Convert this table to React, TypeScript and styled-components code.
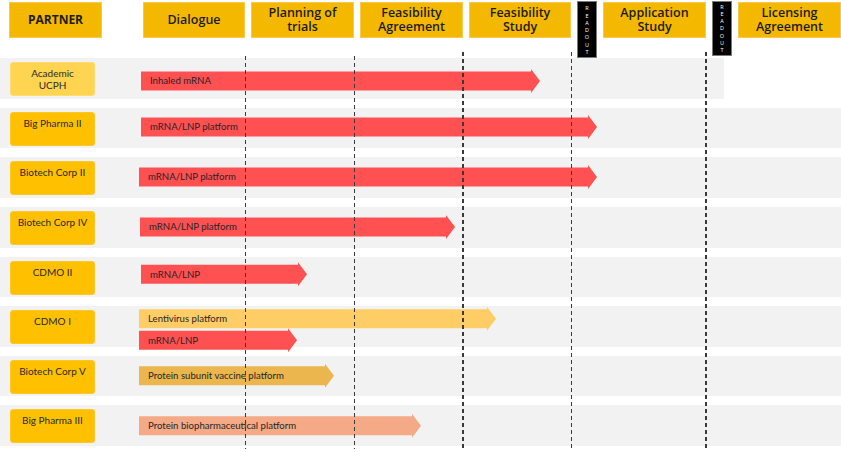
import React from "react";
import styled, { createGlobalStyle } from "styled-components";

const GlobalStyle = createGlobalStyle`
  html, body { margin: 0; padding: 0; background: #ffffff; }
  body { overflow: hidden; font-family: "Open Sans", "Liberation Sans", sans-serif; }
  * { box-sizing: border-box; }
`;

const Page = styled.div`
  position: relative;
  width: 841px;
  height: 452px;
  background: #ffffff;
  overflow: hidden;
`;

const HeaderRow = styled.div`
  display: flex;
  align-items: flex-start;
  gap: 6px;
  height: 58px;
  padding: 1px 0 0 9px;
`;

const HeaderBox = styled.div<{ $w: number; $after?: number; $caps?: boolean }>`
  width: ${(p) => p.$w}px;
  height: 36px;
  margin-top: 1px;
  margin-right: ${(p) => p.$after ?? 0}px;
  flex: none;
  display: flex;
  flex-direction: column;
  align-items: center;
  justify-content: center;
  text-align: center;
  background: #f5b800;
  border: 1px solid #f8c94c;
  font-family: "Open Sans", "Liberation Sans", sans-serif;
  font-weight: ${(p) => (p.$caps ? 700 : 600)};
  font-size: ${(p) => (p.$caps ? 12 : 12.5)}px;
  line-height: 14px;
  color: #1c1c1c;
`;

const HeaderLine = styled.span`
  display: block;
  height: 14px;
`;

const Readout = styled.div<{ $h: number; $pt: number }>`
  width: 20px;
  height: ${(p) => p.$h}px;
  flex: none;
  background: #000000;
  border: 1px solid #7a7a7a;
  display: flex;
  flex-direction: column;
  align-items: center;
  padding-top: ${(p) => p.$pt}px;
  font-family: "Open Sans", "Liberation Sans", sans-serif;
  font-size: 5.5px;
  line-height: 7.3px;
  color: #ffffff;
  -webkit-font-smoothing: antialiased;
`;

const Rows = styled.div`
  display: flex;
  flex-direction: column;
  gap: 9px;
  margin-top: 0.3px;
`;

const Band = styled.div<{ $w: number }>`
  width: ${(p) => p.$w}px;
  height: 40.6px;
  background: #f2f2f2;
  display: flex;
  align-items: flex-start;
`;

const PartnerBox = styled.div<{ $light?: boolean }>`
  width: 85px;
  height: 34px;
  margin: 4px 0 0 10px;
  flex: none;
  border-radius: 3px;
  background: ${(p) => (p.$light ? "#ffd451" : "#ffc000")};
  border: 1px solid ${(p) => (p.$light ? "#ffdc70" : "#ffc726")};
  text-align: center;
  padding-top: 5px;
  font-family: Lato, "Liberation Sans", sans-serif;
  font-size: 10px;
  line-height: 11.5px;
  color: #2a2a2a;
`;

const Lane = styled.div<{ $pt: number }>`
  margin-left: 44px;
  padding-top: ${(p) => p.$pt}px;
  display: flex;
  flex-direction: column;
  align-items: flex-start;
`;

const Arrow = styled.div<{ $color: string; $dx: number; $mt?: number }>`
  height: 24px;
  margin-left: ${(p) => p.$dx}px;
  margin-top: ${(p) => p.$mt ?? 0}px;
  background: ${(p) => p.$color};
  clip-path: polygon(
    0 2.5px,
    calc(100% - 9px) 2.5px,
    calc(100% - 9px) 0,
    100% 50%,
    calc(100% - 9px) 100%,
    calc(100% - 9px) calc(100% - 2.5px),
    0 calc(100% - 2.5px)
  );
  display: flex;
  align-items: center;
  padding-left: 9px;
  font-family: Lato, "Liberation Sans", sans-serif;
  font-size: 9.6px;
  color: #262626;
  white-space: nowrap;
`;

const DashLine = styled.div<{ $x: number; $top: number }>`
  position: absolute;
  left: ${(p) => p.$x}px;
  top: ${(p) => p.$top}px;
  width: 1.3px;
  height: ${(p) => 449 - p.$top}px;
  background: repeating-linear-gradient(
    to bottom,
    #3a3a3a 0,
    #3a3a3a 4px,
    transparent 4px,
    transparent 7px
  );
  pointer-events: none;
`;

const RED = "#ff5052";
const LENTI = "#ffcd66";
const SUBUNIT = "#eab64d";
const SALMON = "#f4aa86";

type ArrowSpec = { label: string; color: string; dx: number; w: number; mt?: number };
type RowSpec = { partner: string[]; light?: boolean; band: number; pt: number; arrows: ArrowSpec[] };

const rows: RowSpec[] = [
  {
    partner: ["Academic", "UCPH"],
    light: true,
    band: 724,
    pt: 10.7,
    arrows: [{ label: "Inhaled mRNA", color: RED, dx: 2, w: 399 }],
  },
  { partner: ["Big Pharma II"], band: 841, pt: 7.1, arrows: [{ label: "mRNA/LNP platform", color: RED, dx: 2, w: 456 }] },
  { partner: ["Biotech Corp II"], band: 841, pt: 7.4, arrows: [{ label: "mRNA/LNP platform", color: RED, dx: 0, w: 458 }] },
  { partner: ["Biotech Corp IV"], band: 841, pt: 7.8, arrows: [{ label: "mRNA/LNP platform", color: RED, dx: 1, w: 315 }] },
  { partner: ["CDMO II"], band: 841, pt: 5.5, arrows: [{ label: "mRNA/LNP", color: RED, dx: 2, w: 166 }] },
  {
    partner: ["CDMO I"],
    band: 841,
    pt: 0.6,
    arrows: [
      { label: "Lentivirus platform", color: LENTI, dx: 0, w: 357 },
      { label: "mRNA/LNP", color: RED, dx: 0, w: 158, mt: -2.7 },
    ],
  },
  { partner: ["Biotech Corp V"], band: 841, pt: 7.9, arrows: [{ label: "Protein subunit vaccine platform", color: SUBUNIT, dx: 0, w: 195 }] },
  { partner: ["Big Pharma III"], band: 841, pt: 8.3, arrows: [{ label: "Protein biopharmaceutical platform", color: SALMON, dx: 0, w: 282 }] },
];

const ReadoutLetters = () => (
  <>
    {"READOUT".split("").map((c, i) => (
      <span key={i}>{c}</span>
    ))}
  </>
);

const Head = ({ lines }: { lines: string[] }) => (
  <>
    {lines.map((l, i) => (
      <HeaderLine key={i}>{l}</HeaderLine>
    ))}
  </>
);

const lines: { x: number; top: number }[] = [
  { x: 244.7, top: 56 },
  { x: 353.7, top: 56 },
  { x: 462.3, top: 52 },
  { x: 570.7, top: 52 },
  { x: 705.3, top: 52 },
];

export default function App() {
  return (
    <Page>
      <GlobalStyle />
      <HeaderRow>
        <HeaderBox $w={93} $after={35} $caps>
          PARTNER
        </HeaderBox>
        <HeaderBox $w={102}>Dialogue</HeaderBox>
        <HeaderBox $w={103}>
          <Head lines={["Planning of", "trials"]} />
        </HeaderBox>
        <HeaderBox $w={103}>
          <Head lines={["Feasibility", "Agreement"]} />
        </HeaderBox>
        <HeaderBox $w={102}>
          <Head lines={["Feasibility", "Study"]} />
        </HeaderBox>
        <Readout $h={57} $pt={3.3}>
          <ReadoutLetters />
        </Readout>
        <HeaderBox $w={103}>
          <Head lines={["Application", "Study"]} />
        </HeaderBox>
        <Readout $h={55} $pt={1.5}>
          <ReadoutLetters />
        </Readout>
        <HeaderBox $w={103}>
          <Head lines={["Licensing", "Agreement"]} />
        </HeaderBox>
      </HeaderRow>
      <Rows>
        {rows.map((r, i) => (
          <Band key={i} $w={r.band}>
            <PartnerBox $light={r.light}>
              {r.partner.map((l, j) => (
                <div key={j}>{l}</div>
              ))}
            </PartnerBox>
            <Lane $pt={r.pt}>
              {r.arrows.map((a, j) => (
                <Arrow key={j} $color={a.color} $dx={a.dx} $mt={a.mt} style={{ width: a.w }}>
                  {a.label}
                </Arrow>
              ))}
            </Lane>
          </Band>
        ))}
      </Rows>
      {lines.map((l, i) => (
        <DashLine key={i} $x={l.x} $top={l.top} />
      ))}
    </Page>
  );
}
